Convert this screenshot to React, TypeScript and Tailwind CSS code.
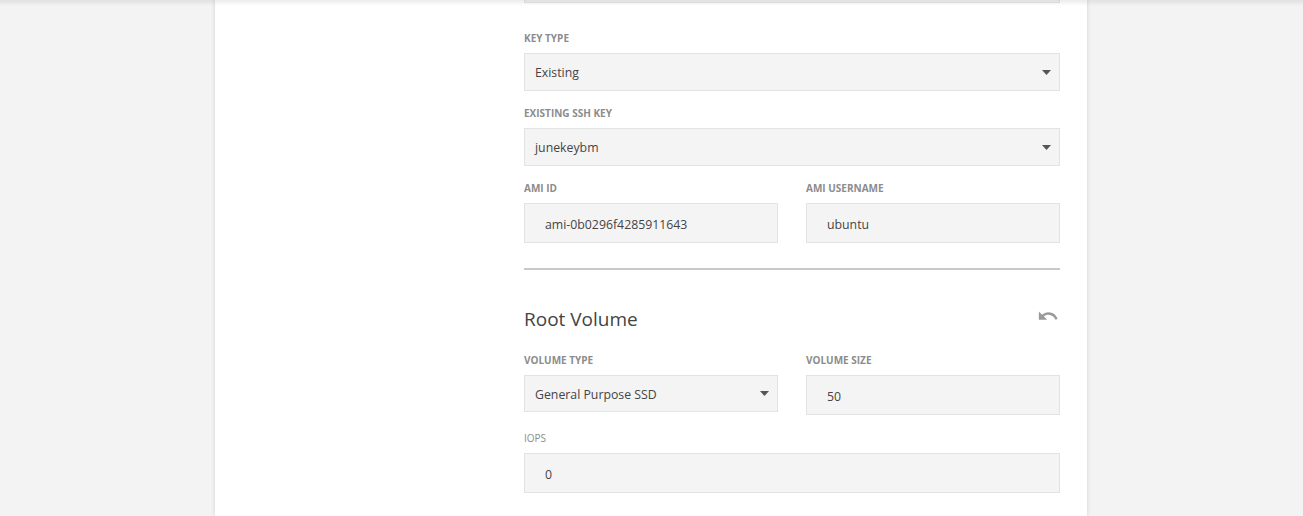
import React from "react";

const font = { fontFamily: '"Open Sans", "Noto Sans", sans-serif' };

function Label({ children }: { children: React.ReactNode }) {
  return (
    <div className="text-[10px] leading-[14px] font-bold uppercase text-[#8c8c8c] tracking-[0px] mb-[8px]">
      {children}
    </div>
  );
}

function Caret() {
  return (
    <svg width="9" height="5" viewBox="0 0 9 5" className="shrink-0">
      <path d="M0 0h9L4.5 5z" fill="#555" />
    </svg>
  );
}

function Select({ value, h = "h-[38px]" }: { value: string; h?: string }) {
  return (
    <div
      className={`${h} bg-[#f4f4f4] border border-[#e3e3e3] flex items-center justify-between pl-[10px] pr-[8px] text-[12.3px] text-[#444]`}
    >
      <span className="pt-[3px]">{value}</span>
      <Caret />
    </div>
  );
}

function Input({ value }: { value: string }) {
  return (
    <div className="h-[40px] bg-[#f4f4f4] border border-[#e3e3e3] flex items-center pl-[20px] pt-[4px] text-[12.3px] text-[#444]">
      {value}
    </div>
  );
}

export default function App() {
  return (
    <div className="w-[1303px] h-[516px] bg-[#f3f3f3] overflow-hidden relative" style={font}>
      <div className="absolute left-0 right-0 top-0 h-[6px] bg-gradient-to-b from-[#00000014] to-transparent z-10" />
      <div className="ml-[215px] w-[872px] h-[516px] bg-white shadow-[0_0_4px_rgba(0,0,0,0.15)] flex">
        <div className="w-[309px] shrink-0" />
        <div className="w-[536px] flex flex-col">
          <div className="h-[3px] border border-t-0 border-[#e3e3e3] bg-[#f4f4f4]" />
          <div className="mt-[28px]">
            <Label>Key Type</Label>
            <Select value="Existing" />
          </div>
          <div className="mt-[15px]">
            <Label>Existing SSH Key</Label>
            <Select value="junekeybm" />
          </div>
          <div className="mt-[15px] grid grid-cols-2 gap-[28px]">
            <div>
              <Label>AMI ID</Label>
              <Input value="ami-0b0296f4285911643" />
            </div>
            <div>
              <Label>AMI Username</Label>
              <Input value="ubuntu" />
            </div>
          </div>
          <div className="mt-[25px] h-[2px] bg-[#c8c8c8]" />
          <div className="mt-[36px] flex items-center justify-between">
            <div className="text-[19px] leading-[26px] text-[#444]">Root Volume</div>
            <svg width="22" height="22" viewBox="0 0 24 24" className="mr-[1px] -mt-[6px]">
              <path
                d="M12.5 8c-2.65 0-5.05.99-6.9 2.6L2 7v9h9l-3.62-3.62c1.39-1.16 3.16-1.88 5.12-1.88 3.54 0 6.55 2.31 7.6 5.5l2.37-.78C21.08 11.03 17.15 8 12.5 8z"
                fill="#9a9a9a"
              />
            </svg>
          </div>
          <div className="mt-[21px] grid grid-cols-2 gap-[28px] items-start">
            <div>
              <Label>Volume Type</Label>
              <Select value="General Purpose SSD" h="h-[37px]" />
            </div>
            <div>
              <Label>Volume Size</Label>
              <Input value="50" />
            </div>
          </div>
          <div className="mt-[16px]">
            <div className="text-[10px] leading-[14px] uppercase text-[#8c8c8c] mb-[8px]">IOPS</div>
            <Input value="0" />
          </div>
        </div>
      </div>
    </div>
  );
}
